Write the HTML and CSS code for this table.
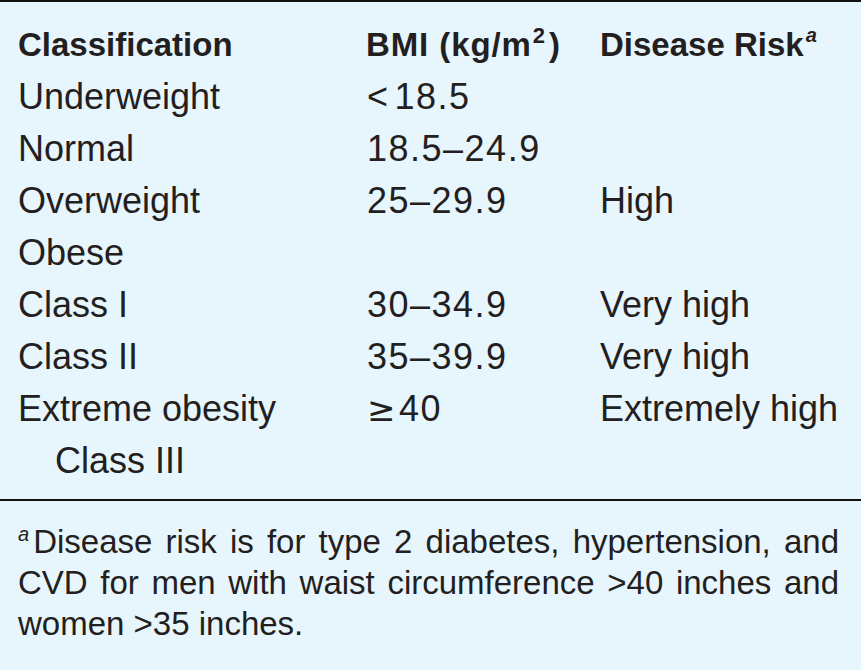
FILE: index.html
```html
<!DOCTYPE html>
<html>
<head>
<meta charset="utf-8">
<link rel="stylesheet" href="styles.css">
</head>
<body>
<div class="panel">
  <div class="grid">
    <div class="cell head">Classification</div>
    <div class="cell head bmi">BMI (kg/m<sup class="sup">2</sup>)</div>
    <div class="cell head">Disease Risk<sup class="fn">a</sup></div>

    <div class="cell">Underweight</div>
    <div class="cell num"><span class="op">&lt;</span>18.5</div>
    <div class="cell"></div>

    <div class="cell">Normal</div>
    <div class="cell num">18.5–24.9</div>
    <div class="cell"></div>

    <div class="cell">Overweight</div>
    <div class="cell num">25–29.9</div>
    <div class="cell">High</div>

    <div class="cell">Obese</div>
    <div class="cell"></div>
    <div class="cell"></div>

    <div class="cell">Class I</div>
    <div class="cell num">30–34.9</div>
    <div class="cell">Very high</div>

    <div class="cell">Class II</div>
    <div class="cell num">35–39.9</div>
    <div class="cell">Very high</div>

    <div class="cell">Extreme obesity</div>
    <div class="cell num"><span class="op ge">≥</span>40</div>
    <div class="cell">Extremely high</div>

    <div class="cell indent">Class III</div>
    <div class="cell"></div>
    <div class="cell"></div>
  </div>
  <p class="note"><sup class="fn">a</sup>Disease risk is for type 2 diabetes, hypertension, and CVD for men with waist circumference &gt;40 inches and women &gt;35 inches.</p>
</div>
</body>
</html>
```
FILE: styles.css
```css
html, body {
  margin: 0;
  padding: 0;
  background: #e7f5fd;
}
.panel {
  width: 861px;
  height: 670px;
  box-sizing: border-box;
  background: #e7f5fd;
  border-top: 2px solid #111;
  font-family: "Liberation Sans", Arial, sans-serif;
  color: #231f20;
}
.grid {
  display: grid;
  grid-template-columns: 347px 235px 1fr;
  padding: 17px 0 12px 18px;
  border-bottom: 2px solid #111;
}
.cell {
  font-size: 36px;
  line-height: 52px;
  height: 52px;
  white-space: nowrap;
}
.head {
  font-weight: bold;
  font-size: 33px;
}
.bmi {
  letter-spacing: 0.9px;
  padding-left: 1px;
}
.num {
  letter-spacing: 1.5px;
  padding-left: 2px;
}
.indent {
  padding-left: 37px;
}
.sup {
  font-size: 22px;
  vertical-align: 13px;
  line-height: 0;
  margin: 0 3px 0 1px;
}
.fn {
  font-style: italic;
  font-weight: bold;
  font-size: 20px;
  vertical-align: 14px;
  line-height: 0;
  margin-left: 2px;
}
.note .fn {
  font-weight: normal;
  margin-left: 0;
  margin-right: 4px;
  font-size: 20px;
  vertical-align: 12px;
}
.op {
  margin-right: 5px;
}
.ge {
  font-family: "DejaVu Sans", sans-serif;
  font-size: 34px;
  margin-right: 2px;
}
.note {
  margin: 0;
  padding: 20px 22px 0 18px;
  font-size: 33px;
  line-height: 41px;
  text-align: justify;
}
```
